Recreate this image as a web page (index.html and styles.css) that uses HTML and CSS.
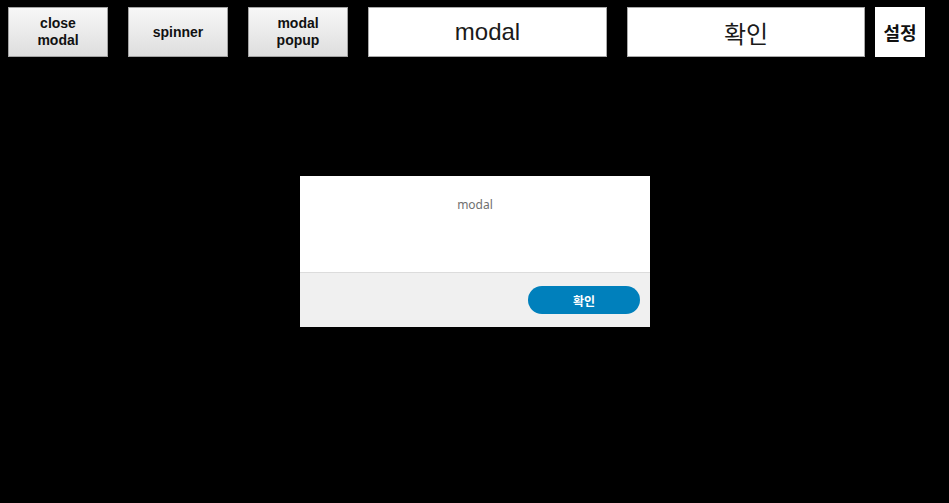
FILE: index.html
```html
<!DOCTYPE html>
<html lang="ko">
<head>
<meta charset="utf-8">
<link rel="stylesheet" href="styles.css">
</head>
<body>
<div class="toolbar">
  <button class="btn">close<br>modal</button>
  <button class="btn">spinner</button>
  <button class="btn">modal<br>popup</button>
  <input class="field" type="text" value="modal">
  <input class="field field-2" type="text" value="확인">
  <div class="setting">설정</div>
</div>
<div class="stage">
  <div class="modal">
    <div class="modal-body">modal</div>
    <div class="modal-foot">
      <button class="ok">확인</button>
    </div>
  </div>
</div>
</body>
</html>
```
FILE: styles.css
```css
html, body {
  margin: 0;
  padding: 0;
  background: #000;
  width: 949px;
  height: 503px;
  overflow: hidden;
  font-family: "Noto Sans", "Noto Sans CJK KR", sans-serif;
}
.toolbar {
  display: flex;
  align-items: flex-start;
  padding: 7px 0 0 8px;
}
.btn {
  box-sizing: border-box;
  width: 100px;
  height: 50px;
  margin: 0 20px 0 0;
  padding: 0;
  border: 1px solid #a3a3a3;
  background: linear-gradient(#f7f7f7, #dedede);
  font-family: "Liberation Sans", "Noto Sans CJK KR", sans-serif;
  font-weight: 700;
  font-size: 14px;
  line-height: 17px;
  color: #111;
}
.field {
  box-sizing: border-box;
  width: 239px;
  height: 50px;
  margin: 0 20px 0 0;
  padding: 0;
  border: 1px solid #a9a9a9;
  background: #fff;
  text-align: center;
  font-family: "Liberation Sans", "Noto Sans CJK KR", sans-serif;
  font-size: 24px;
  color: #1a1a1a;
  outline: none;
}
.field-2 {
  width: 238px;
  margin-right: 10px;
}
.setting {
  box-sizing: border-box;
  width: 50px;
  height: 50px;
  background: #fff;
  display: flex;
  align-items: center;
  justify-content: center;
  font-family: "Noto Sans CJK KR", sans-serif;
  font-weight: 700;
  font-size: 18px;
  color: #111;
}
.stage {
  display: flex;
  justify-content: flex-start;
  padding: 119px 0 0 300px;
}
.modal {
  width: 350px;
  background: #fff;
}
.modal-body {
  height: 97px;
  box-sizing: border-box;
  padding-top: 20px;
  text-align: center;
  font-size: 12px;
  line-height: 18px;
  color: #707070;
  border-bottom: 1px solid #dcdcdc;
}
.modal-foot {
  height: 54px;
  background: #f0f0f0;
  display: flex;
  align-items: center;
  justify-content: flex-end;
  padding-right: 10px;
}
.ok {
  width: 112px;
  height: 28px;
  border: 0;
  border-radius: 14px;
  background: #0080bc;
  color: #fff;
  font-family: "Noto Sans CJK KR", sans-serif;
  font-weight: 700;
  font-size: 12px;
  padding: 0;
}
```
